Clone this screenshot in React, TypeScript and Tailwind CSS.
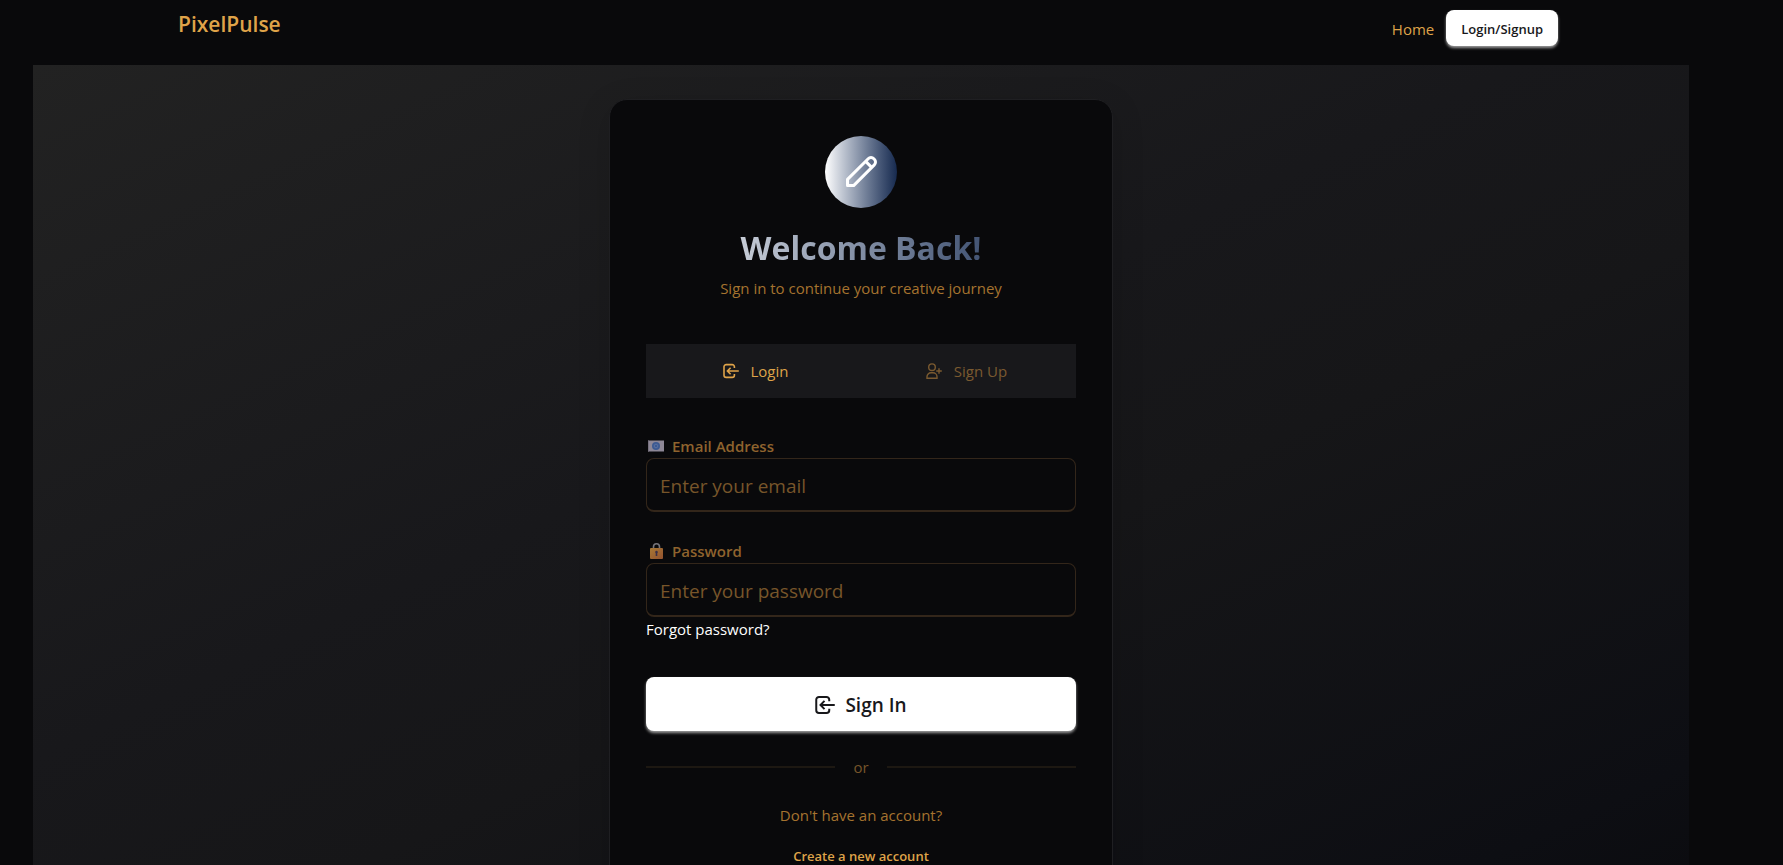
import { useState } from "react";
import type { ReactNode } from "react";

function PencilIcon() {
  return (
    <svg className="size-9" viewBox="0 0 36 36" fill="none" stroke="#fff" strokeWidth="3" strokeLinejoin="round" aria-hidden="true">
      <path d="M4.5 31.6v-6.2L25.2 4.7a3.9 3.9 0 0 1 5.6 0l.5.5a3.9 3.9 0 0 1 0 5.6L10.6 31.6z" />
      <path d="M22.6 7.4l6 6" />
    </svg>
  );
}

function LoginIcon({ className }: { className: string }) {
  return (
    <svg className={className} viewBox="0 0 16 16" fill="none" stroke="currentColor" strokeWidth="1.6" aria-hidden="true">
      <path d="M11.4 5V3.8a2.2 2.2 0 0 0-2.2-2.2H3.2A2.2 2.2 0 0 0 1 3.8v8.4a2.2 2.2 0 0 0 2.2 2.2h6a2.2 2.2 0 0 0 2.2-2.2V11" />
      <path d="M15.8 8H4.8M7.6 4.7 4.4 8l3.2 3.3" />
    </svg>
  );
}

function UserPlusIcon({ className }: { className: string }) {
  return (
    <svg className={className} viewBox="0 0 16 16" fill="none" stroke="currentColor" strokeWidth="1.4" aria-hidden="true">
      <circle cx="6" cy="4.2" r="3.3" />
      <path d="M1 15.2v-1.4a4 4 0 0 1 4-4h2a4 4 0 0 1 4 4v1.4z" />
      <path d="M13 5.2v5.6M10.2 8h5.6" />
    </svg>
  );
}

function MailIcon() {
  return (
    <svg className="w-4 h-3" viewBox="0 0 16 12" aria-hidden="true">
      <path fill="#8d8796" d="M0 .5h16v11H0z" />
      <path fill="#77717f" d="M0 .5h1v11H0z" />
      <circle cx="8" cy="6" r="4" fill="#3c5a92" />
      <circle cx="8" cy="6" r="1.8" fill="none" stroke="#667aa6" strokeWidth=".7" />
    </svg>
  );
}

function LockIcon() {
  return (
    <svg className="w-4 h-4" viewBox="0 0 16 16" aria-hidden="true">
      <defs>
        <linearGradient id="lock-body" x1="0" y1="0" x2="1" y2="1">
          <stop offset="0" stopColor="#a87935" />
          <stop offset="1" stopColor="#93522f" />
        </linearGradient>
      </defs>
      <path d="M5.5 6V3.8a3 3 0 0 1 6 0V6" fill="none" stroke="#77757b" strokeWidth="1.6" />
      <rect x="2" y="5" width="13" height="11" rx="1" fill="url(#lock-body)" />
      <path d="M8.5 7.7a1.4 1.4 0 0 1 .8 2.5V13H7.7v-2.8a1.4 1.4 0 0 1 .8-2.5z" fill="#3b3048" />
    </svg>
  );
}

type FieldProps = { id: string; type: string; label: string; placeholder: string; icon: ReactNode };

function Field({ id, type, label, placeholder, icon }: FieldProps) {
  return (
    <div>
      <label htmlFor={id} className="flex h-6 items-center gap-2 pl-0.5 text-[15px] font-semibold text-[#8f632e]">
        {icon}
        {label}
      </label>
      <input
        id={id}
        type={type}
        placeholder={placeholder}
        className="block h-[54px] w-full rounded-lg border border-b-2 border-[#33261a] bg-transparent px-[13px] pt-0.5 text-[19px] text-[#e0a24a] outline-none placeholder:text-[#77552a]"
      />
    </div>
  );
}

export default function App() {
  const [tab, setTab] = useState("login");
  const tabClass = "flex flex-1 cursor-pointer items-center justify-center gap-3";

  return (
    <div className="min-h-screen bg-[#09090b] pr-[61px] font-['Open_Sans',sans-serif] text-[15px] leading-6">
      <nav className="flex h-[65px] items-start justify-between pr-[164px] pl-[178px]">
        <a href="#" className="pt-2.5 text-[21px] leading-7 font-semibold text-[#dfa349]">PixelPulse</a>
        <div className="flex items-center gap-3 pt-2.5">
          <a href="#" className="pt-0.5 text-[#dfa349]">Home</a>
          <button className="h-9 cursor-pointer rounded-lg bg-white px-[15px] pt-0.5 text-[13px] font-semibold text-[#18181b] shadow-[0_2px_3px_rgba(255,255,255,0.6)]">
            Login/Signup
          </button>
        </div>
      </nav>

      <main className="mx-[33px] flex h-[960px] justify-center bg-linear-[155deg,#222222_0%,#18181b_40%,#161618_55%,#0d0e13_85%,#09090b_100%] pt-[34px]">
        <section className="w-[504px] self-start rounded-[18px] border border-[#1f1f22] bg-[#09090b] px-9 py-9 shadow-[0_8px_32px_rgba(0,0,0,0.15)]">
          <header className="flex flex-col items-center">
            <div className="flex size-[72px] items-center justify-center rounded-full bg-linear-to-r from-white to-[#172a4f]">
              <PencilIcon />
            </div>
            <h1 className="mt-[17px] w-full bg-linear-to-r from-white to-[#172a4f] bg-clip-text text-center text-[32px] leading-[45px] font-bold text-transparent">
              Welcome Back!
            </h1>
            <p className="mt-1.5 text-[#a5732f]">Sign in to continue your creative journey</p>
          </header>

          <div role="tablist" className="mt-11 flex h-[54px] bg-[#18181b] px-1">
            <button role="tab" aria-selected={tab === "login"} onClick={() => setTab("login")} className={`${tabClass} ${tab === "login" ? "text-[#dfa349]" : "text-[#7b5a30]"}`}>
              <LoginIcon className="size-4" />
              Login
            </button>
            <button role="tab" aria-selected={tab === "signup"} onClick={() => setTab("signup")} className={`${tabClass} ${tab === "signup" ? "text-[#dfa349]" : "text-[#7b5a30]"}`}>
              <UserPlusIcon className="size-4" />
              Sign Up
            </button>
          </div>

          <form className="mt-9" onSubmit={(e) => e.preventDefault()}>
            <Field id="email" type="email" label="Email Address" placeholder="Enter your email" icon={<MailIcon />} />
            <div className="mt-[27px]">
              <Field id="password" type="password" label="Password" placeholder="Enter your password" icon={<LockIcon />} />
            </div>
            <a href="#" className="inline-block text-white">Forgot password?</a>
            <button type="submit" className="mt-9 flex h-[54px] w-full cursor-pointer items-center justify-center gap-2.5 rounded-lg bg-white pt-0.5 text-[19px] font-semibold text-[#18181b] shadow-[0_2px_3px_rgba(255,255,255,0.6)]">
              <LoginIcon className="size-5" />
              Sign In
            </button>
          </form>

          <div className="mt-6 flex items-center gap-[18px] text-[#77552a]">
            <span className="h-0.5 flex-1 bg-[#1d1812]" />
            or
            <span className="h-0.5 flex-1 bg-[#1d1812]" />
          </div>
          <p className="mt-6 text-center text-[#a5732f]">Don't have an account?</p>
          <div className="mt-4 text-center">
            <a href="#" className="text-[13px] font-semibold text-[#dfa349]">Create a new account</a>
          </div>
        </section>
      </main>
    </div>
  );
}
